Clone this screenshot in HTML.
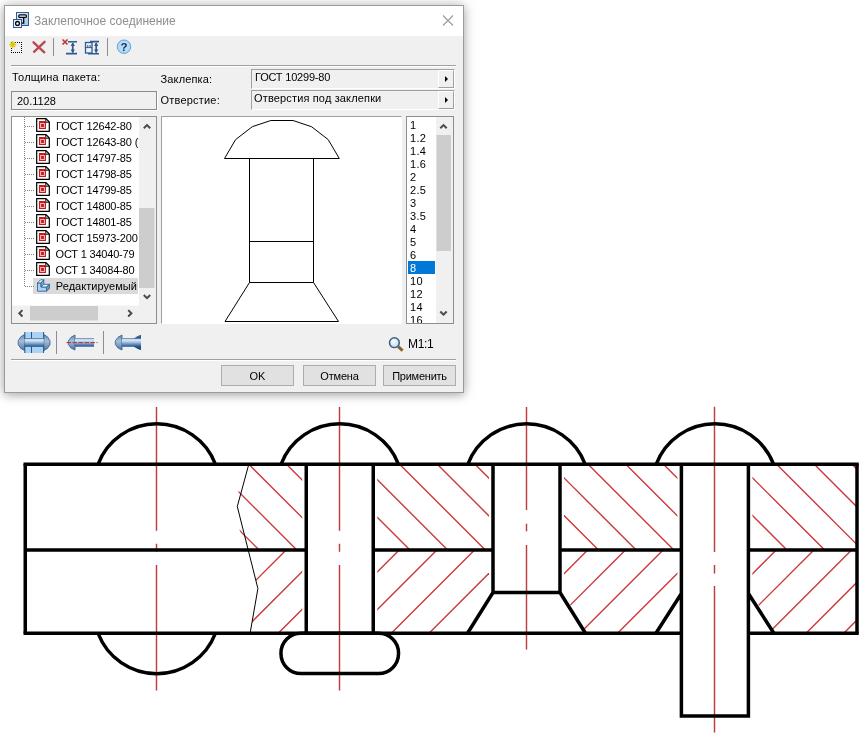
<!DOCTYPE html>
<html lang="ru">
<head>
<meta charset="utf-8">
<title>Заклепочное соединение</title>
<style>
html,body{margin:0;padding:0;background:#fff;}
body{width:864px;height:738px;position:relative;overflow:hidden;font-family:"Liberation Sans",sans-serif;font-size:11px;color:#000;}
#draw{position:absolute;left:0;top:0;width:864px;height:738px;}
#win{position:absolute;left:4px;top:5px;width:458px;height:386px;border:1px solid #9b9b9b;background:#f0f0f0;box-shadow:0 0 12px rgba(0,0,0,.26),0 3px 8px rgba(0,0,0,.16);}
/* everything inside #ui is positioned in page coordinates */
#ui{position:absolute;left:-5px;top:-6px;width:864px;height:738px;will-change:transform;}
#ui *{position:absolute;box-sizing:border-box;}
#title{left:5px;top:6px;width:458px;height:30px;background:#fff;}
.tt{left:34px;top:14px;font-size:12px;line-height:14px;color:#8e8e8e;white-space:nowrap;}
.lbl{white-space:nowrap;line-height:13px;height:13px;}
.hsep{height:2px;border-top:1px solid #a0a0a0;border-bottom:1px solid #fff;}
.vsep{width:1px;background:#8e8e8e;}
.field{border:1px solid;border-color:#a0a0a0 #fff #fff #a0a0a0;background:#f0f0f0;}
.edit{border:1px solid #8c8c8c;background:#f0f0f0;box-shadow:1px 1px 0 #fff;}
.box{border:1px solid #8e8e8e;background:#fff;overflow:hidden;}
.btn{border:1px solid #adadad;background:#e1e1e1;text-align:center;line-height:20px;height:21px;white-space:nowrap;}
.cbtn{width:16px;height:18px;border:1px solid;border-color:#fff #a0a0a0 #a0a0a0 #fff;background:#f0f0f0;}
.cbtn:after{content:"";position:absolute;left:6px;top:5px;border:3px solid transparent;border-left:3.5px solid #000;border-right:0;}
.it{left:56px;white-space:nowrap;line-height:16px;height:16px;}
.li{left:410px;line-height:13px;height:13px;white-space:nowrap;}
.sb{background:#f0f0f0;}
.th{background:#cdcdcd;}
svg{overflow:visible;}
</style>
</head>
<body>
<svg id="draw" width="864" height="738" viewBox="0 0 864 738">
<defs>
<clipPath id="cu"><path d="M248.8,464.25 L302.25,464.25 L302.25,550 L247.5,550 L239.8,531 L237.2,506 L238.3,492 Z M377.25,464.25 H489 V550 H377.25 Z M564,464.25 H677.4 V550 H564 Z M752.4,464.25 H857 V550 H752.4 Z"/></clipPath>
<clipPath id="cl"><path d="M248.8,550 L302.25,550 L302.25,633.25 L250.1,633.25 L257.9,588.6 Z M377.25,550 L489,550 L489,592.5 L467.8,633.25 L377.25,633.25 Z M564,550 L677.4,550 L677.4,593.5 L656.2,633.25 L585.2,633.25 L564,592.5 Z M752.4,550 L857,550 L857,633.25 L773.6,633.25 L752.4,593.5 Z"/></clipPath>
</defs>
<g stroke="#cb3436" stroke-width="1.35" fill="none">
<g clip-path="url(#cu)">
<path d="M173.4,464.25 L259.15,550"/>
<path d="M211.1,464.25 L296.85,550"/>
<path d="M248.8,464.25 L334.55,550"/>
<path d="M286.5,464.25 L372.25,550"/>
<path d="M324.2,464.25 L409.95,550"/>
<path d="M361.9,464.25 L447.65,550"/>
<path d="M399.6,464.25 L485.35,550"/>
<path d="M437.3,464.25 L523.05,550"/>
<path d="M475,464.25 L560.75,550"/>
<path d="M512.7,464.25 L598.45,550"/>
<path d="M550.4,464.25 L636.15,550"/>
<path d="M588.1,464.25 L673.85,550"/>
<path d="M625.8,464.25 L711.55,550"/>
<path d="M663.5,464.25 L749.25,550"/>
<path d="M701.2,464.25 L786.95,550"/>
<path d="M738.9,464.25 L824.65,550"/>
<path d="M776.6,464.25 L862.35,550"/>
<path d="M814.3,464.25 L900.05,550"/>
<path d="M852,464.25 L937.75,550"/>
</g><g clip-path="url(#cl)">
<path d="M248.4,550 L165.15,633.25"/>
<path d="M286.1,550 L202.85,633.25"/>
<path d="M323.8,550 L240.55,633.25"/>
<path d="M361.5,550 L278.25,633.25"/>
<path d="M399.2,550 L315.95,633.25"/>
<path d="M436.9,550 L353.65,633.25"/>
<path d="M474.6,550 L391.35,633.25"/>
<path d="M512.3,550 L429.05,633.25"/>
<path d="M550,550 L466.75,633.25"/>
<path d="M587.7,550 L504.45,633.25"/>
<path d="M625.4,550 L542.15,633.25"/>
<path d="M663.1,550 L579.85,633.25"/>
<path d="M700.8,550 L617.55,633.25"/>
<path d="M738.5,550 L655.25,633.25"/>
<path d="M776.2,550 L692.95,633.25"/>
<path d="M813.9,550 L730.65,633.25"/>
<path d="M851.6,550 L768.35,633.25"/>
<path d="M889.3,550 L806.05,633.25"/>
<path d="M927,550 L843.75,633.25"/>
</g>
</g>
<g fill="none">
<path d="M156.5,407 V530.75 M156.5,543.75 V551.75 M156.5,565 V690.5" stroke="#fbdcdc" stroke-width="2.6"/>
<path d="M156.5,407 V530.75 M156.5,543.75 V551.75 M156.5,565 V690.5" stroke="#b84040" stroke-width="1.2"/>
<path d="M339.5,407 V530.75 M339.5,543.75 V551.75 M339.5,565 V690.5" stroke="#fbdcdc" stroke-width="2.6"/>
<path d="M339.5,407 V530.75 M339.5,543.75 V551.75 M339.5,565 V690.5" stroke="#b84040" stroke-width="1.2"/>
<path d="M526.5,407 V510 M526.5,523.75 V531.25 M526.5,545 V649.5" stroke="#fbdcdc" stroke-width="2.6"/>
<path d="M526.5,407 V510 M526.5,523.75 V531.25 M526.5,545 V649.5" stroke="#b84040" stroke-width="1.2"/>
<path d="M714.5,406.7 V551.9 M714.5,565 V573.6 M714.5,586 V732.5" stroke="#fbdcdc" stroke-width="2.6"/>
<path d="M714.5,406.7 V551.9 M714.5,565 V573.6 M714.5,586 V732.5" stroke="#b84040" stroke-width="1.2"/>
</g>
<path d="M248.8,464.25 L237.3,506.5 L257.9,588.6 L250.1,633.25" stroke="#000" stroke-width="1" fill="none"/>
<g stroke="#000" stroke-width="3.5" fill="none" stroke-linecap="butt" stroke-linejoin="miter">
<path d="M23.5,464.25 H858.75"/>
<path d="M25.25,464.25 V633.25"/>
<path d="M857,464.25 V633.25"/>
<path d="M23.5,633.25 H681.4 M748.4,633.25 H858.75"/>
<path d="M25.25,550 H306.25 M373.25,550 H493 M560,550 H681.4 M748.4,550 H857"/>
<path d="M98.05,464.25 A62.84 62.84 0 0 1 215.45,464.25"/>
<path d="M281.05,464.25 A62.84 62.84 0 0 1 398.45,464.25"/>
<path d="M467.8,464.25 A62.84 62.84 0 0 1 585.2,464.25"/>
<path d="M656.2,464.25 A62.84 62.84 0 0 1 773.6,464.25"/>
<path d="M98.05,633.25 A62.84 62.84 0 0 0 215.45,633.25"/>
<path d="M306.25,464.25 V633.25 M373.25,464.25 V633.25"/>
<rect x="280.95" y="633.25" width="117.6" height="40.25" rx="20" ry="20"/>
<path d="M493,464.25 V592.5 H560 V464.25 M493,592.5 L467.5,633.25 M560,592.5 L585.5,633.25"/>
<path d="M681.4,464.25 V716 H748.4 V464.25 M681.4,593.5 L655.9,633.25 M748.4,593.5 L773.9,633.25"/>
</g>
</svg>
<div id="win"><div id="ui">
  <div id="title"></div>
  <div class="tt">Заклепочное соединение</div>
  <svg style="left:0;top:0" width="864" height="738" viewBox="0 0 864 738">
<defs><linearGradient id="gb" gradientUnits="userSpaceOnUse" x1="0" y1="338.2" x2="0" y2="346.8"><stop offset="0" stop-color="#2d5c96"/><stop offset=".18" stop-color="#e8f1fa"/><stop offset=".5" stop-color="#9dbbdb"/><stop offset=".82" stop-color="#4877ad"/><stop offset="1" stop-color="#1f4e8a"/></linearGradient><linearGradient id="gh" x1="0" y1="0" x2="0" y2="1"><stop offset="0" stop-color="#5f87b3"/><stop offset=".4" stop-color="#a9bfd6"/><stop offset="1" stop-color="#4a76a8"/></linearGradient><linearGradient id="gi" x1="0" y1="0" x2="1" y2="1"><stop offset="0" stop-color="#eaf3fb"/><stop offset="1" stop-color="#9cc3e6"/></linearGradient><radialGradient id="gl" cx=".4" cy=".35" r=".7"><stop offset="0" stop-color="#ffffff"/><stop offset="1" stop-color="#b9d6ee"/></radialGradient></defs>
<rect x="16.5" y="12.5" width="12" height="13" fill="url(#gi)" stroke="#2f5b9b"/>
<rect x="13.5" y="19.5" width="8" height="8" fill="#e3eefa" stroke="#2f5b9b"/>
<rect x="18.8" y="14.8" width="7.6" height="2.6" rx="1" fill="#fff" stroke="#000" stroke-width="1.2"/>
<path d="M23.7 17.5V23.2H21.8" fill="none" stroke="#000" stroke-width="1.3"/>
<circle cx="17.5" cy="23.4" r="1.9" fill="#fff" stroke="#000" stroke-width="1.3"/>
<path d="M443 15.5L453 25.5M453 15.5L443 25.5" stroke="#9a9a9a" stroke-width="1.1" fill="none"/>
<path d="M11 42.500H22M11 52.500H22" stroke="#000" stroke-width="1" stroke-dasharray="1 1" fill="none"/><path d="M11.500 42V53M21.500 42V53" stroke="#000" stroke-width="1" stroke-dasharray="1 1" fill="none"/>
<circle cx="12.8" cy="44.6" r="2.6" fill="#f2e21a"/>
<path d="M9.2 44.6H16.4M12.8 41V48.2M10.3 42.1L15.3 47.1M15.3 42.1L10.3 47.1" stroke="#d8c410" stroke-width="1" fill="none"/>
<path d="M33.500 42.300L44.300 52.300M44.600 41.800L34 51.800" stroke="#b9494c" stroke-width="2.300" stroke-linecap="round" fill="none"/>
<path d="M62.5 39.5L67.5 44.5M67.5 39.5L62.5 44.5" stroke="#c0392b" stroke-width="1.7" fill="none"/>
<path d="M68 41.8H77M66 53.6H77" stroke="#2c5a94" stroke-width="1.6" fill="none"/>
<path d="M72.75 43V52.5" stroke="#2c5a94" stroke-width="1.700" fill="none"/>
<path d="M72.75 42.5L70.6 46H74.9Z M72.75 53L70.6 49.5H74.9Z" fill="#2c5a94"/>
<rect x="85.5" y="42.5" width="6.5" height="10.5" fill="#eef4fb" stroke="#2c5a94" stroke-width="1.3"/>
<path d="M85.5 47.6H92" stroke="#2c5a94" stroke-width="1"/>
<path d="M87 46H91" stroke="#000" stroke-width="1" stroke-dasharray="1 .6"/>
<path d="M90 41.6H99M88 53.8H99" stroke="#2c5a94" stroke-width="1.6" fill="none"/>
<path d="M96.2 43V52.5" stroke="#2c5a94" stroke-width="1.700" fill="none"/>
<path d="M96.2 42.5L94 46H98.4Z M96.2 53L94 49.5H98.4Z" fill="#2c5a94"/>
<circle cx="124" cy="46.7" r="6.7" fill="#b4dcf6" stroke="#5c9fd4" stroke-width="1"/>
<text x="124" y="50.8" text-anchor="middle" font-family="Liberation Sans, sans-serif" font-weight="bold" font-size="11.5" fill="#1a2c55">?</text>
<rect x="24.500" y="332" width="19.500" height="21" fill="#a9d2f3"/>
<path d="M24.800 332V353M31.500 332V353M43.600 332V353" stroke="#24568f" stroke-width="1" fill="none"/>
<path d="M24.500 334.500L20.800 336.800L18.200 340.800V344.600L20.800 348.400L24.500 350.500Z" fill="url(#gh)" stroke="#2c5a92" stroke-width=".8" stroke-linejoin="round"/>
<path d="M43.800 334.500L47.500 336.800L50 340.800V344.600L47.500 348.400L43.800 350.500Z" fill="url(#gh)" stroke="#2c5a92" stroke-width=".8" stroke-linejoin="round"/>
<rect x="24.500" y="338.200" width="19.300" height="8.600" fill="url(#gb)"/>
<path d="M75 335L71 337.300L68.300 341V344.400L71 348L75 350Z" fill="url(#gh)" stroke="#2c5a92" stroke-width=".8" stroke-linejoin="round"/>
<rect x="75" y="338.300" width="19" height="8.400" fill="url(#gb)"/>
<path d="M66.500 342.600H97.500" stroke="#d02828" stroke-width="1" stroke-dasharray="4.500 1.500" fill="none"/>
<path d="M122 335L118 337.300L115.300 341V344.400L118 348L122 350Z" fill="url(#gh)" stroke="#2c5a92" stroke-width=".8" stroke-linejoin="round"/>
<path d="M122 338.300H132.500C136 338.300 137 335.500 141 335V350C137 349.500 136 346.700 132.500 346.700H122Z" fill="url(#gb)"/>
<path d="M398.200 346.700L402.600 350.700" stroke="#8f5f2c" stroke-width="3" stroke-linecap="butt"/>
<circle cx="394.400" cy="342.700" r="4.900" fill="url(#gl)" stroke="#3f6080" stroke-width="1.500"/>
</svg>
  <div class="vsep" style="left:53px;top:38px;height:18px"></div>
  <div class="vsep" style="left:107px;top:38px;height:18px"></div>
  <div class="hsep" style="left:11px;top:65px;width:445px"></div>
  <div class="lbl" style="left:12px;top:71px;letter-spacing:.2px">Толщина пакета:</div>
  <div class="lbl" style="left:160.5px;top:73px;letter-spacing:.15px">Заклепка:</div>
  <div class="lbl" style="left:160.5px;top:94px;letter-spacing:.2px">Отверстие:</div>
  <div class="edit" style="left:11px;top:91px;width:146px;height:19px"></div>
  <div class="lbl" style="left:17px;top:95px">20.1128</div>
  <div class="field" style="left:251px;top:69px;width:204px;height:20px"></div>
  <div class="cbtn" style="left:438px;top:70px"></div>
  <div class="lbl" style="left:255px;top:71px;letter-spacing:-.2px">ГОСТ 10299-80</div>
  <div class="field" style="left:251px;top:90px;width:204px;height:20px"></div>
  <div class="cbtn" style="left:438px;top:91px"></div>
  <div class="lbl" style="left:254px;top:92px;letter-spacing:.15px">Отверстия под заклепки</div>
  <!-- tree -->
  <div class="box" style="left:11px;top:116px;width:146px;height:208px"></div>
  <div style="left:12px;top:117px;width:127px;height:187px;overflow:hidden">
<div style="left:21px;top:161px;width:105px;height:16px;background:#dadada"></div>
<div class="it" style="left:44px;top:1px;letter-spacing:-.15px">ГОСТ 12642-80</div>
<div class="it" style="left:44px;top:17px;letter-spacing:-.15px">ГОСТ 12643-80 (</div>
<div class="it" style="left:44px;top:33px;letter-spacing:-.15px">ГОСТ 14797-85</div>
<div class="it" style="left:44px;top:49px;letter-spacing:-.15px">ГОСТ 14798-85</div>
<div class="it" style="left:44px;top:65px;letter-spacing:-.15px">ГОСТ 14799-85</div>
<div class="it" style="left:44px;top:81px;letter-spacing:-.15px">ГОСТ 14800-85</div>
<div class="it" style="left:44px;top:97px;letter-spacing:-.15px">ГОСТ 14801-85</div>
<div class="it" style="left:44px;top:113px;letter-spacing:-.15px">ГОСТ 15973-200</div>
<div class="it" style="left:43.6px;top:129px;letter-spacing:-.2px">ОСТ 1 34040-79</div>
<div class="it" style="left:43.6px;top:145px;letter-spacing:-.2px">ОСТ 1 34084-80</div>
<div class="it" style="left:43.8px;top:161px;letter-spacing:.05px">Редактируемый</div>
</div>
<svg style="left:0;top:0" width="864" height="738" viewBox="0 0 864 738">
<path d="M24.5 117V286" stroke="#808080" stroke-width="1" stroke-dasharray="1 1" fill="none"/>
<path d="M25 126.5 H35" stroke="#808080" stroke-width="1" stroke-dasharray="1 1" fill="none"/>
<path d="M36.700 118.7 H46L49.300 122 V131.3 H36.700Z" fill="#fff" stroke="#000" stroke-width="1.2"/>
<path d="M45.800 118.7 V122.2 H49.300" fill="none" stroke="#000" stroke-width="1"/>
<rect x="39" y="121" width="7" height="8" fill="#c8191c"/>
<rect x="40.600" y="123.6" width="3.800" height="3.800" fill="#c8191c" stroke="#f6dada" stroke-width=".9"/>
<path d="M25 142.5 H35" stroke="#808080" stroke-width="1" stroke-dasharray="1 1" fill="none"/>
<path d="M36.700 134.7 H46L49.300 138 V147.3 H36.700Z" fill="#fff" stroke="#000" stroke-width="1.2"/>
<path d="M45.800 134.7 V138.2 H49.300" fill="none" stroke="#000" stroke-width="1"/>
<rect x="39" y="137" width="7" height="8" fill="#c8191c"/>
<rect x="40.600" y="139.6" width="3.800" height="3.800" fill="#c8191c" stroke="#f6dada" stroke-width=".9"/>
<path d="M25 158.5 H35" stroke="#808080" stroke-width="1" stroke-dasharray="1 1" fill="none"/>
<path d="M36.700 150.7 H46L49.300 154 V163.3 H36.700Z" fill="#fff" stroke="#000" stroke-width="1.2"/>
<path d="M45.800 150.7 V154.2 H49.300" fill="none" stroke="#000" stroke-width="1"/>
<rect x="39" y="153" width="7" height="8" fill="#c8191c"/>
<rect x="40.600" y="155.6" width="3.800" height="3.800" fill="#c8191c" stroke="#f6dada" stroke-width=".9"/>
<path d="M25 174.5 H35" stroke="#808080" stroke-width="1" stroke-dasharray="1 1" fill="none"/>
<path d="M36.700 166.7 H46L49.300 170 V179.3 H36.700Z" fill="#fff" stroke="#000" stroke-width="1.2"/>
<path d="M45.800 166.7 V170.2 H49.300" fill="none" stroke="#000" stroke-width="1"/>
<rect x="39" y="169" width="7" height="8" fill="#c8191c"/>
<rect x="40.600" y="171.6" width="3.800" height="3.800" fill="#c8191c" stroke="#f6dada" stroke-width=".9"/>
<path d="M25 190.5 H35" stroke="#808080" stroke-width="1" stroke-dasharray="1 1" fill="none"/>
<path d="M36.700 182.7 H46L49.300 186 V195.3 H36.700Z" fill="#fff" stroke="#000" stroke-width="1.2"/>
<path d="M45.800 182.7 V186.2 H49.300" fill="none" stroke="#000" stroke-width="1"/>
<rect x="39" y="185" width="7" height="8" fill="#c8191c"/>
<rect x="40.600" y="187.6" width="3.800" height="3.800" fill="#c8191c" stroke="#f6dada" stroke-width=".9"/>
<path d="M25 206.5 H35" stroke="#808080" stroke-width="1" stroke-dasharray="1 1" fill="none"/>
<path d="M36.700 198.7 H46L49.300 202 V211.3 H36.700Z" fill="#fff" stroke="#000" stroke-width="1.2"/>
<path d="M45.800 198.7 V202.2 H49.300" fill="none" stroke="#000" stroke-width="1"/>
<rect x="39" y="201" width="7" height="8" fill="#c8191c"/>
<rect x="40.600" y="203.6" width="3.800" height="3.800" fill="#c8191c" stroke="#f6dada" stroke-width=".9"/>
<path d="M25 222.5 H35" stroke="#808080" stroke-width="1" stroke-dasharray="1 1" fill="none"/>
<path d="M36.700 214.7 H46L49.300 218 V227.3 H36.700Z" fill="#fff" stroke="#000" stroke-width="1.2"/>
<path d="M45.800 214.7 V218.2 H49.300" fill="none" stroke="#000" stroke-width="1"/>
<rect x="39" y="217" width="7" height="8" fill="#c8191c"/>
<rect x="40.600" y="219.6" width="3.800" height="3.800" fill="#c8191c" stroke="#f6dada" stroke-width=".9"/>
<path d="M25 238.5 H35" stroke="#808080" stroke-width="1" stroke-dasharray="1 1" fill="none"/>
<path d="M36.700 230.7 H46L49.300 234 V243.3 H36.700Z" fill="#fff" stroke="#000" stroke-width="1.2"/>
<path d="M45.800 230.7 V234.2 H49.300" fill="none" stroke="#000" stroke-width="1"/>
<rect x="39" y="233" width="7" height="8" fill="#c8191c"/>
<rect x="40.600" y="235.6" width="3.800" height="3.800" fill="#c8191c" stroke="#f6dada" stroke-width=".9"/>
<path d="M25 254.5 H35" stroke="#808080" stroke-width="1" stroke-dasharray="1 1" fill="none"/>
<path d="M36.700 246.7 H46L49.300 250 V259.3 H36.700Z" fill="#fff" stroke="#000" stroke-width="1.2"/>
<path d="M45.800 246.7 V250.2 H49.300" fill="none" stroke="#000" stroke-width="1"/>
<rect x="39" y="249" width="7" height="8" fill="#c8191c"/>
<rect x="40.600" y="251.6" width="3.800" height="3.800" fill="#c8191c" stroke="#f6dada" stroke-width=".9"/>
<path d="M25 270.5 H35" stroke="#808080" stroke-width="1" stroke-dasharray="1 1" fill="none"/>
<path d="M36.700 262.7 H46L49.300 266 V275.3 H36.700Z" fill="#fff" stroke="#000" stroke-width="1.2"/>
<path d="M45.800 262.7 V266.2 H49.300" fill="none" stroke="#000" stroke-width="1"/>
<rect x="39" y="265" width="7" height="8" fill="#c8191c"/>
<rect x="40.600" y="267.6" width="3.800" height="3.800" fill="#c8191c" stroke="#f6dada" stroke-width=".9"/>
<path d="M25 286.5 H34" stroke="#808080" stroke-width="1" stroke-dasharray="1 1" fill="none"/>
<g stroke="#2e6aa0" stroke-width=".9" stroke-linejoin="round">
<polygon points="37.5,283.0 41.0,283.0 41.0,287.0 46.5,287.0 46.5,291.2 37.5,291.2" fill="#b3d1ea"/>
<polygon points="37.5,283.0 40.5,279.8 43.8,279.8 41.0,283.0" fill="#f2f8fd"/>
<polygon points="41.0,283.0 43.8,279.8 43.8,284.3 41.0,287.0" fill="#7ba6cf"/>
<polygon points="41.0,287.0 43.8,284.3 49.5,284.3 46.5,287.0" fill="#e9f2fb"/>
<polygon points="46.5,287.0 49.5,284.3 49.5,288.5 46.5,291.2" fill="#6c9ac6"/>
</g>
<rect x="139" y="117" width="17" height="206" fill="#f0f0f0"/>
<rect x="12" y="305.500" width="144" height="17.500" fill="#f0f0f0"/>
<rect x="139" y="208" width="15.500" height="80" fill="#cdcdcd"/>
<rect x="30" y="306" width="68" height="14.500" fill="#cdcdcd"/>
<path d="M143.800 128.300L147 125.100L150.200 128.300 M143.800 295L147 298.200L150.200 295 M22.500 310.100L19.300 313.300L22.500 316.500 M128.200 310.100L131.400 313.300L128.200 316.500" stroke="#4a4a4a" stroke-width="2" fill="none"/>
</svg>
  <!-- preview -->
  <div class="box" style="left:161px;top:116px;width:241px;height:208px;border-color:#a0a0a0 #fff #fff #a0a0a0"></div>
  <svg style="left:0;top:0" width="864" height="738" viewBox="0 0 864 738">
<g fill="none" stroke="#000" stroke-width="1">
<path d="M224.5 158.5 L235.6 139.6 L252.3 126.7 L270.8 120.5 L293.0 120.5 L311.5 126.7 L328.2 139.6 L339.3 158.5Z"/>
<path d="M249.5 158.500V282.500H313.500V158.500M249.500 241.500H313.500"/>
<path d="M249.500 282.500L225 321.500H338.500L313.500 282.500"/>
</g></svg>
  <!-- list -->
  <div class="box" style="left:406px;top:116px;width:48px;height:208px"></div>
  <div style="left:407px;top:117px;width:29px;height:206px;overflow:hidden">
<div style="left:1px;top:144px;width:27px;height:13px;background:#0078d7"></div>
<div class="li" style="left:3px;top:2px;letter-spacing:.3px;">1</div>
<div class="li" style="left:3px;top:15px;letter-spacing:.3px;">1.2</div>
<div class="li" style="left:3px;top:28px;letter-spacing:.3px;">1.4</div>
<div class="li" style="left:3px;top:41px;letter-spacing:.3px;">1.6</div>
<div class="li" style="left:3px;top:54px;letter-spacing:.3px;">2</div>
<div class="li" style="left:3px;top:67px;letter-spacing:.3px;">2.5</div>
<div class="li" style="left:3px;top:80px;letter-spacing:.3px;">3</div>
<div class="li" style="left:3px;top:93px;letter-spacing:.3px;">3.5</div>
<div class="li" style="left:3px;top:106px;letter-spacing:.3px;">4</div>
<div class="li" style="left:3px;top:119px;letter-spacing:.3px;">5</div>
<div class="li" style="left:3px;top:132px;letter-spacing:.3px;">6</div>
<div class="li" style="left:3px;top:145px;letter-spacing:.3px;color:#fff;">8</div>
<div class="li" style="left:3px;top:158px;letter-spacing:.3px;">10</div>
<div class="li" style="left:3px;top:171px;letter-spacing:.3px;">12</div>
<div class="li" style="left:3px;top:184px;letter-spacing:.3px;">14</div>
<div class="li" style="left:3px;top:197px;letter-spacing:.3px;">16</div>
</div>
<svg style="left:0;top:0" width="864" height="738" viewBox="0 0 864 738">
<rect x="436" y="117" width="17" height="206" fill="#f0f0f0"/>
<rect x="436.500" y="135" width="14.500" height="116" fill="#cdcdcd"/>
<path d="M440.300 128.300L443.500 125.100L446.700 128.300 M440.300 311.500L443.500 314.700L446.700 311.500" stroke="#4a4a4a" stroke-width="2" fill="none"/>
</svg>
  <div class="vsep" style="left:56px;top:331px;height:23px"></div>
  <div class="vsep" style="left:103px;top:331px;height:23px"></div>
  <div class="lbl" style="left:408px;top:337px;font-size:12px;line-height:14px;height:14px;letter-spacing:-.3px">M1:1</div>
  <div class="hsep" style="left:11px;top:359px;width:445px"></div>
  <div class="btn" style="left:221px;top:365px;width:73px">OK</div>
  <div class="btn" style="left:303px;top:365px;width:73px;letter-spacing:-.2px">Отмена</div>
  <div class="btn" style="left:383px;top:365px;width:73px;letter-spacing:-.25px">Применить</div>
</div></div>
</body>
</html>
